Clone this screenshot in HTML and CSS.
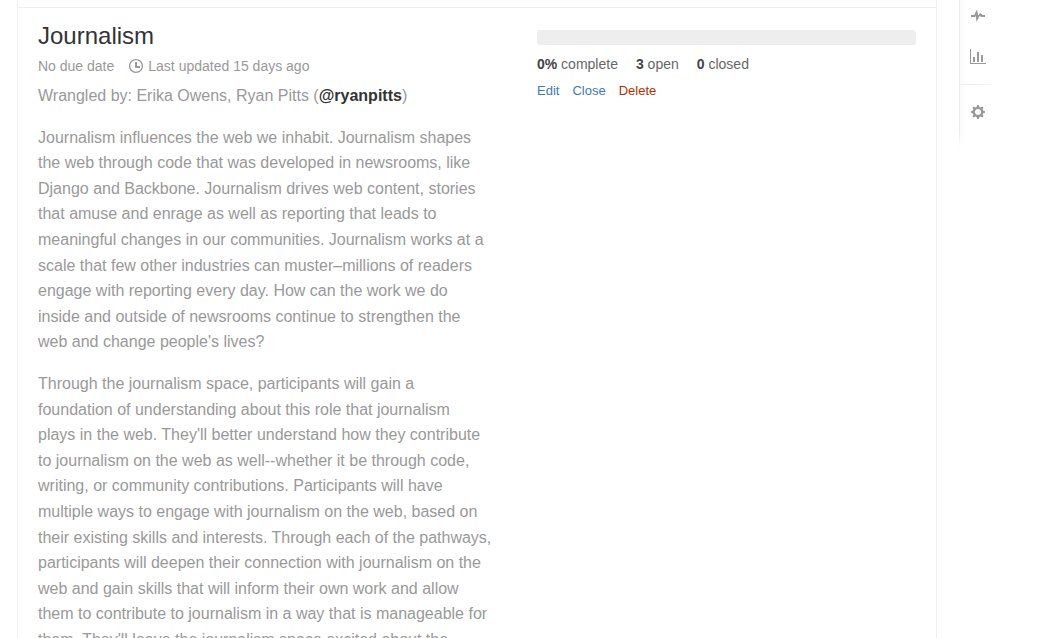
FILE: index.html
```html
<!DOCTYPE html>
<html lang="en">
<head>
<meta charset="utf-8">
<title>Milestones</title>
<link rel="stylesheet" href="styles.css">
</head>
<body>
<div class="page">
  <main class="milestones">
    <article class="milestone">
      <section class="details">
        <h2 class="title">Journalism</h2>
        <p class="meta">
          <span>No due date</span>
          <span class="updated"><svg class="clock" viewBox="0 0 14 16" aria-hidden="true"><path d="M8 8h3v2H7c-.55 0-1-.45-1-1V4h2v4zM7 2.300c3.140 0 5.700 2.560 5.700 5.700s-2.560 5.700-5.700 5.700A5.710 5.710 0 0 1 1.300 8c0-3.140 2.560-5.700 5.700-5.700zM7 1C3.140 1 0 4.140 0 8s3.140 7 7 7 7-3.140 7-7-3.140-7-7-7z" fill-rule="evenodd"/></svg>Last updated 15 days ago</span>
        </p>
        <div class="description">
          <p>Wrangled by: Erika Owens, Ryan Pitts (<a class="mention" href="#">@ryanpitts</a>)</p>
          <p>Journalism influences the web we inhabit. Journalism shapes<br>the web through code that was developed in newsrooms, like<br>Django and Backbone. Journalism drives web content, stories<br>that amuse and enrage as well as reporting that leads to<br>meaningful changes in our communities. Journalism works at a<br>scale that few other industries can muster–millions of readers<br>engage with reporting every day. How can the work we do<br>inside and outside of newsrooms continue to strengthen the<br>web and change people's lives?</p>
          <p>Through the journalism space, participants will gain a<br>foundation of understanding about this role that journalism<br>plays in the web. They'll better understand how they contribute<br>to journalism on the web as well--whether it be through code,<br>writing, or community contributions. Participants will have<br>multiple ways to engage with journalism on the web, based on<br>their existing skills and interests. Through each of the pathways,<br>participants will deepen their connection with journalism on the<br>web and gain skills that will inform their own work and allow<br>them to contribute to journalism in a way that is manageable for<br>them. They'll leave the journalism space excited about the</p>
        </div>
      </section>
      <section class="stats">
        <div class="progress"></div>
        <p class="counts"><span><b>0%</b> complete</span><span><b>3</b> open</span><span><b>0</b> closed</span></p>
        <div class="actions"><a href="#">Edit</a><a href="#">Close</a><button class="delete" type="button">Delete</button></div>
      </section>
    </article>
  </main>
  <nav class="rail" aria-label="Repository">
    <a href="#" aria-label="Pulse"><svg width="14" height="16" viewBox="0 0 14 16"><path d="M11.500 7L9 4.800 7.300 7.400 6 1.600 3.200 7H0v2h4l.7-1.300.8 6L8.600 8l1.900 1H14V7z"/></svg></a>
    <a href="#" aria-label="Graphs"><svg width="16" height="16" viewBox="0 0 16 16"><path d="M16 14v1H0V0h1v14h15zM5 13H3V8h2v5zm4 0H7V3h2v10zm4 0h-2V6h2v7z"/></svg></a>
    <div class="divider"></div>
    <a href="#" aria-label="Settings"><svg width="14" height="16" viewBox="0 0 14 16"><path fill-rule="evenodd" d="M14 8.770v-1.600l-1.940-.64-.45-1.090.88-1.840-1.130-1.130-1.810.91-1.090-.45-.69-1.920h-1.600l-.63 1.940-1.110.45-1.840-.88-1.130 1.130.91 1.810-.45 1.090L0 7.230v1.590l1.940.64.45 1.090-.88 1.840 1.130 1.130 1.810-.91 1.090.45.69 1.920h1.590l.63-1.940 1.110-.45 1.840.88 1.130-1.130-.92-1.810.47-1.090L14 8.750v.02zM7 11c-1.660 0-3-1.340-3-3s1.340-3 3-3 3 1.340 3 3-1.340 3-3 3z"/></svg></a>
  </nav>
</div>
</body>
</html>
```
FILE: styles.css
```css
* { box-sizing: border-box; }
html { overflow: hidden; }
body { margin: 0; height: 100vh; overflow: hidden; background: #fff; color: #333; font-family: "Liberation Sans", Arial, sans-serif; }
p, h2 { margin: 0; }
a { text-decoration: none; }
.page { display: flex; align-items: flex-start; padding: 0 55px 0 17px; }
.milestones { flex: 1; padding-top: 7px; border: 1px solid #eee; border-width: 0 1px; }
.milestone { display: grid; grid-template-columns: 459px 1fr; column-gap: 40px; padding: 12px 20px 20px; border-top: 1px solid #eee; }
.title { font-size: 24px; line-height: 32px; font-weight: 400; }
.meta { display: flex; gap: 15px; font-size: 14px; line-height: 28px; color: #999; }
.updated { display: flex; align-items: center; gap: 5px; }
.clock { width: 14px; height: 16px; fill: #999; }
.description { margin-top: 3px; font-size: 16px; line-height: 1.6; color: #999; white-space: nowrap; }
.description p { margin-bottom: 16px; }
.mention { color: #333; font-weight: 700; }
.progress { height: 15px; margin-top: 10px; border-radius: 3px; background: #eee; }
.counts { display: flex; gap: 18px; margin-top: 7px; font-size: 14px; line-height: 24px; color: #666; }
.counts b { color: #444; }
.actions { display: flex; gap: 13px; margin-top: 5px; font-size: 13px; line-height: 20px; }
.actions a { color: #4078c0; }
.delete { padding: 0; border: 0; background: none; font: inherit; color: #bd2c00; }
.rail { display: flex; flex-direction: column; align-items: center; width: 38px; height: 150px; flex: none; margin-left: 22px; padding-top: 8px; background: linear-gradient(to bottom, transparent 130px, #fff 148px), linear-gradient(to right, #ececec 1px, #fafafa 1px, #fff 7px); }
.rail a { height: 16px; margin-bottom: 25px; }
.rail svg { display: block; fill: #999; }
.divider { align-self: stretch; height: 1px; margin: -6px 0 19px; background: linear-gradient(to right, #eee 50%, #fff); }
```
